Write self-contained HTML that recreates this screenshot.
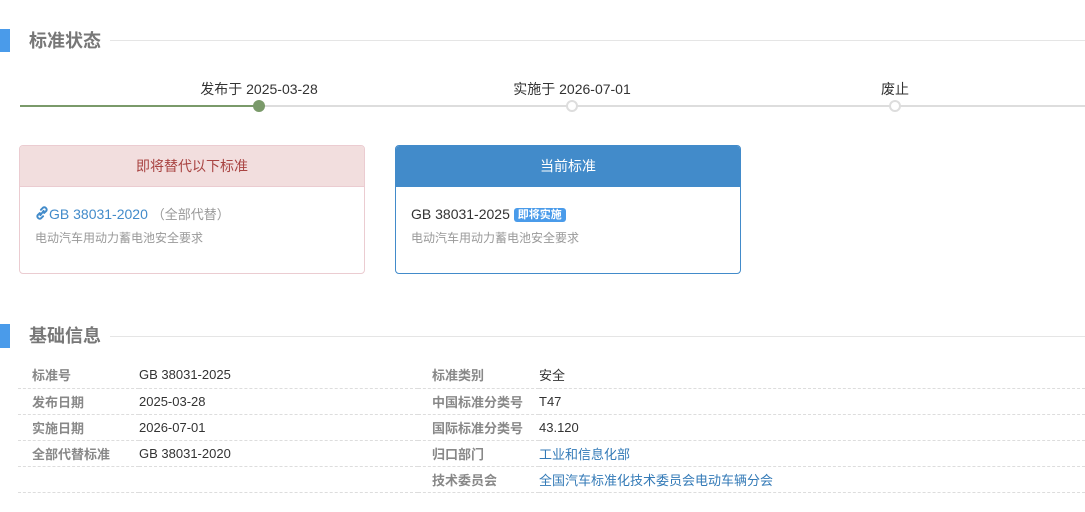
<!DOCTYPE html>
<html><head><meta charset="utf-8"><style>
*{margin:0;padding:0;box-sizing:border-box}
body{width:1085px;height:512px;background:#fff;font-family:"Liberation Sans","Noto Sans CJK SC",sans-serif;position:relative;overflow:hidden;color:#333}
.bar{position:absolute;left:0;width:10px;background:#4a9bea}
.h{position:absolute;left:29px;font-size:18px;font-weight:bold;color:#777;line-height:24px}
.hl{position:absolute;height:1px;background:#e5e5e5;right:0}
.lbl{position:absolute;font-size:14px;color:#333;transform:translateX(-50%);white-space:nowrap;top:79px}
.dot{position:absolute;width:12px;height:12px;border-radius:50%;top:100px}
.card{position:absolute;top:145px;width:346px;height:129px;border:1px solid;border-radius:4px;overflow:hidden}
.ch{height:41px;line-height:40px;text-align:center;font-size:14px;border-bottom:1px solid}
.cb{padding:17px 15px 0}
.l1{font-size:14px;line-height:20px}
.l2{font-size:12px;color:#999;margin-top:4px}
table{position:absolute;left:18px;top:362px;width:1067px;border-collapse:collapse;font-size:13px;table-layout:fixed}
td{height:26px;border-bottom:1px dashed #ddd;padding:0;vertical-align:middle;white-space:nowrap}
td.k{color:#888;font-weight:bold;padding-left:14px}
a{color:#337ab7;text-decoration:none}
</style></head><body>
<div class="bar" style="top:29px;height:23px"></div>
<div class="h" style="top:29px">标准状态</div>
<div class="hl" style="left:110px;top:40px"></div>
<div style="position:absolute;left:20px;right:0;top:105px;height:2px;background:#ddd"></div>
<div style="position:absolute;left:20px;width:240px;top:105px;height:2px;background:#7a9a6a"></div>
<div class="dot" style="left:253px;background:#7a9a6a"></div>
<div class="dot" style="left:566px;background:#fff;border:2px solid #ddd"></div>
<div class="dot" style="left:889px;background:#fff;border:2px solid #ddd"></div>
<div class="lbl" style="left:259px">发布于 2025-03-28</div>
<div class="lbl" style="left:572px">实施于 2026-07-01</div>
<div class="lbl" style="left:895px">废止</div>

<div class="card" style="left:19px;border-color:#ebccd1">
<div class="ch" style="background:#f2dede;color:#a94442;border-color:#ebccd1">即将替代以下标准</div>
<div class="cb"><div class="l1"><a style="color:#428bca"><svg width="14" height="14" viewBox="0 0 12 13" style="vertical-align:-1px"><path d="M5 3.5l2-2a2.2 2.2 0 013 3l-2 2M7 9.5l-2 2a2.2 2.2 0 01-3-3l2-2M4.5 8.5l3-4" fill="none" stroke="#428bca" stroke-width="1.8" stroke-linecap="round"/></svg>GB 38031-2020</a> <span style="color:#999;font-size:13px">（全部代替）</span></div>
<div class="l2">电动汽车用动力蓄电池安全要求</div></div></div>

<div class="card" style="left:395px;border-color:#428bca">
<div class="ch" style="background:#428bca;color:#fff;border-color:#428bca">当前标准</div>
<div class="cb"><div class="l1">GB 38031-2025 <span style="background:#4a9bea;color:#fff;font-size:11px;font-weight:bold;padding:1px 4px;border-radius:3px;vertical-align:1px">即将实施</span></div>
<div class="l2">电动汽车用动力蓄电池安全要求</div></div></div>

<div class="bar" style="top:324px;height:24px"></div>
<div class="h" style="top:324px">基础信息</div>
<div class="hl" style="left:110px;top:336px"></div>
<table>
<colgroup><col style="width:121px"><col style="width:279px"><col style="width:121px"><col></colgroup>
<tr><td class="k">标准号</td><td>GB 38031-2025</td><td class="k">标准类别</td><td>安全</td></tr>
<tr><td class="k">发布日期</td><td>2025-03-28</td><td class="k">中国标准分类号</td><td>T47</td></tr>
<tr><td class="k">实施日期</td><td>2026-07-01</td><td class="k">国际标准分类号</td><td>43.120</td></tr>
<tr><td class="k">全部代替标准</td><td>GB 38031-2020</td><td class="k">归口部门</td><td><a>工业和信息化部</a></td></tr>
<tr><td class="k"></td><td></td><td class="k">技术委员会</td><td><a>全国汽车标准化技术委员会电动车辆分会</a></td></tr>
</table>
</body></html>
